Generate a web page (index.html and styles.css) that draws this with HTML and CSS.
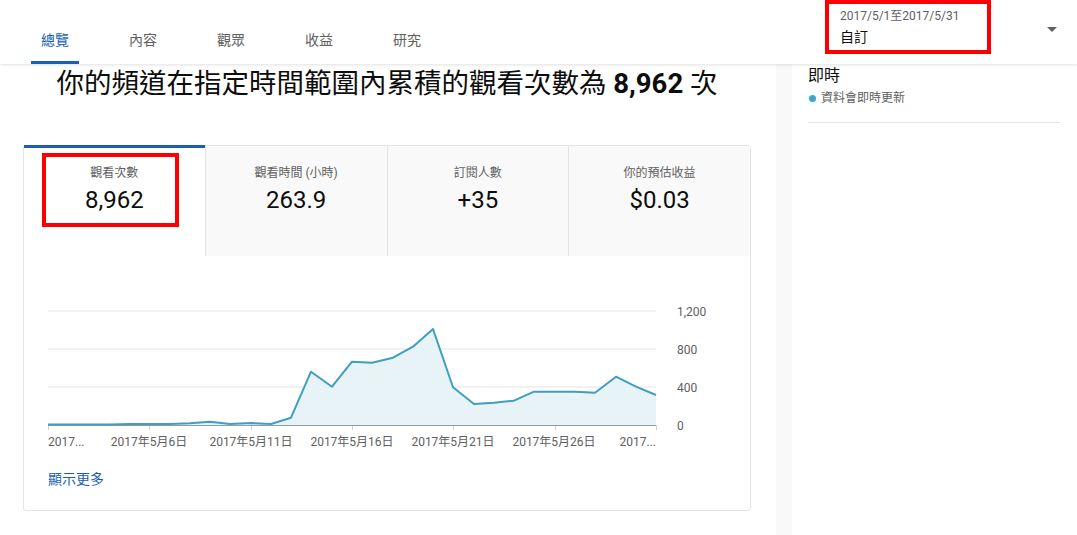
FILE: index.html
```html
<!DOCTYPE html>
<html lang="zh-Hant">
<head>
<meta charset="utf-8">
<title>頻道數據分析</title>
<link rel="stylesheet" href="styles.css">
</head>
<body>
<header class="topbar">
  <nav class="tabs">
    <a class="tab active">總覽</a>
    <a class="tab">內容</a>
    <a class="tab">觀眾</a>
    <a class="tab">收益</a>
    <a class="tab">研究</a>
  </nav>
  <div class="date-picker">
    <div class="date-text">
      <div class="range">2017/5/1至2017/5/31</div>
      <div class="preset">自訂</div>
    </div>
    <svg class="caret" width="10" height="5" viewBox="0 0 10 5"><path d="M0 0h10L5 5z" fill="#606060"/></svg>
    <div class="annot date-annot"></div>
  </div>
</header>
<div class="page">
  <main class="main">
    <h1 class="headline">你的頻道在指定時間範圍內累積的觀看次數為 <b>8,962</b> 次</h1>
    <section class="card">
      <div class="metrics">
        <div class="metric active">
          <div class="m-label">觀看次數</div>
          <div class="m-value">8,962</div>
          <div class="annot metric-annot"></div>
        </div>
        <div class="metric">
          <div class="m-label">觀看時間 (小時)</div>
          <div class="m-value">263.9</div>
        </div>
        <div class="metric">
          <div class="m-label">訂閱人數</div>
          <div class="m-value">+35</div>
        </div>
        <div class="metric">
          <div class="m-label">你的預估收益</div>
          <div class="m-value">$0.03</div>
        </div>
      </div>
      <div class="chart">
        <svg width="726" height="204" viewBox="24 256 726 204">
          <g stroke="#ececec" stroke-width="1.5">
            <line x1="48" y1="311" x2="656" y2="311"/>
            <line x1="48" y1="349" x2="656" y2="349"/>
            <line x1="48" y1="387" x2="656" y2="387"/>
          </g>
          <polygon fill="#e8f3f8" points="48,424.5 68,424.5 89,424.5 109,424.5 129,424 149,424 170,424 190,423.3 210,421.7 230,424 251,423 271,424 291,417.7 311,371.7 332,386.7 352,361.7 372,362.7 393,357.7 413,346.7 433,329 453,387.3 474,404 494,402.7 514,400.7 534,391.7 555,391.7 575,391.7 595,392.7 616,376.7 636,386.7 656,395 656,425 48,425"/>
          <g stroke="#d0d0d0" stroke-width="1">
            <line x1="48.5" y1="425" x2="48.5" y2="430"/>
            <line x1="149.5" y1="425" x2="149.5" y2="430"/>
            <line x1="251.5" y1="425" x2="251.5" y2="430"/>
            <line x1="352.5" y1="425" x2="352.5" y2="430"/>
            <line x1="453.5" y1="425" x2="453.5" y2="430"/>
            <line x1="555.5" y1="425" x2="555.5" y2="430"/>
            <line x1="656.5" y1="425" x2="656.5" y2="430"/>
          </g>
          <line x1="48" y1="425.5" x2="656" y2="425.5" stroke="#8e9da3" stroke-width="1"/>
          <polyline fill="none" stroke="#3e9fc0" stroke-width="2" stroke-linejoin="round" points="48,424.5 68,424.5 89,424.5 109,424.5 129,424 149,424 170,424 190,423.3 210,421.7 230,424 251,423 271,424 291,417.7 311,371.7 332,386.7 352,361.7 372,362.7 393,357.7 413,346.7 433,329 453,387.3 474,404 494,402.7 514,400.7 534,391.7 555,391.7 575,391.7 595,392.7 616,376.7 636,386.7 656,395"/>
          <g class="ylab">
            <text x="677" y="312">1,200</text>
            <text x="677" y="350">800</text>
            <text x="677" y="388">400</text>
            <text x="677" y="426">0</text>
          </g>
          <g class="xlab">
            <text x="48" y="442">2017...</text>
            <text x="149" y="442" text-anchor="middle">2017年5月6日</text>
            <text x="251" y="442" text-anchor="middle">2017年5月11日</text>
            <text x="352" y="442" text-anchor="middle">2017年5月16日</text>
            <text x="453" y="442" text-anchor="middle">2017年5月21日</text>
            <text x="554" y="442" text-anchor="middle">2017年5月26日</text>
            <text x="656" y="442" text-anchor="end">2017...</text>
          </g>
        </svg>
      </div>
      <a class="more">顯示更多</a>
    </section>
  </main>
  <div class="gutter"></div>
  <aside class="side">
    <div class="rt-title">即時</div>
    <div class="rt-sub"><span class="dot"></span>資料會即時更新</div>
    <div class="rt-divider"></div>
  </aside>
</div>
</body>
</html>
```

FILE: styles.css
```css
html, body {
  margin: 0;
  padding: 0;
  background: #fff;
  font-family: Roboto, "Noto Sans CJK TC", "Noto Sans", sans-serif;
  color: #0d0d0d;
}

.topbar {
  height: 64px;
  display: flex;
  background: #fff;
  box-shadow: 0 1px 3px rgba(0, 0, 0, 0.12);
  position: relative;
  z-index: 2;
}

.tabs {
  flex: 1;
  display: flex;
  gap: 40px;
  padding-left: 31px;
}

.tab {
  box-sizing: border-box;
  width: 48px;
  height: 64px;
  padding-top: 31px;
  line-height: 18px;
  font-size: 14px;
  text-align: center;
  color: #606060;
  border-bottom: 3px solid transparent;
  white-space: nowrap;
}

.tab.active {
  color: #1a5fb4;
  border-bottom-color: #1a5fb4;
}

.date-picker {
  width: 232px;
  margin-right: 20px;
  display: flex;
  position: relative;
}

.date-text {
  padding: 8px 0 0 15px;
}

.range {
  font-size: 12px;
  line-height: 16px;
  color: #606060;
}

.preset {
  margin-top: 3px;
  font-size: 14px;
  line-height: 20px;
  color: #0d0d0d;
}

.caret {
  margin-left: auto;
  margin-top: 27px;
}

.annot {
  position: absolute;
  box-sizing: border-box;
  border: 4px solid #f00;
  pointer-events: none;
}

.date-annot {
  left: 0;
  top: 0;
  width: 166px;
  height: 54px;
}

.page {
  display: flex;
  min-height: 471px;
}

.main {
  width: 776px;
  box-sizing: border-box;
  padding: 0 25px 0 23px;
}

.headline {
  margin: 0;
  font-size: 27.5px;
  line-height: 39px;
  font-weight: 400;
  text-align: center;
  color: #0d0d0d;
}

.headline b {
  font-weight: 700;
}

.card {
  margin-top: 42px;
  border: 1px solid #e3e3e3;
  border-radius: 3px;
  background: #fff;
}

.metrics {
  display: flex;
  height: 110px;
}

.metric {
  flex: 1;
  box-sizing: border-box;
  position: relative;
  text-align: center;
  padding-top: 19px;
  background: #f9f9f9;
  border-left: 1px solid #e3e3e3;
}

.metric.active {
  background: #fff;
  border-left: none;
  border-top: 3px solid #1a5fb4;
  margin-top: -1px;
  padding-top: 17px;
}

.m-label {
  font-size: 12px;
  line-height: 16px;
  color: #606060;
}

.m-value {
  margin-top: 4px;
  font-size: 24px;
  line-height: 30px;
  color: #0d0d0d;
}

.metric-annot {
  left: 18px;
  top: 5px;
  width: 137px;
  height: 74px;
}

.chart svg {
  display: block;
}

.ylab text,
.xlab text {
  font-family: Roboto, "Noto Sans CJK TC", sans-serif;
  font-size: 12px;
  fill: #606060;
  dominant-baseline: central;
}

.more {
  display: block;
  margin: 9px 0 0 24px;
  padding-bottom: 21px;
  font-size: 14px;
  line-height: 20px;
  color: #1a5fb4;
}

.gutter {
  width: 16px;
  background: #f9f9f9;
}

.side {
  flex: 1;
  padding: 0 17px 0 16px;
}

.rt-title {
  font-size: 16px;
  line-height: 22px;
  padding-top: 1px;
  color: #0d0d0d;
}

.rt-sub {
  margin-top: 3px;
  display: flex;
  align-items: center;
  font-size: 12px;
  line-height: 16px;
  color: #606060;
}

.dot {
  width: 7px;
  height: 7px;
  border-radius: 50%;
  background: #3ea6cc;
  margin: 0 5px 0 1px;
}

.rt-divider {
  margin-top: 16px;
  height: 1px;
  background: #e3e3e3;
}
```
